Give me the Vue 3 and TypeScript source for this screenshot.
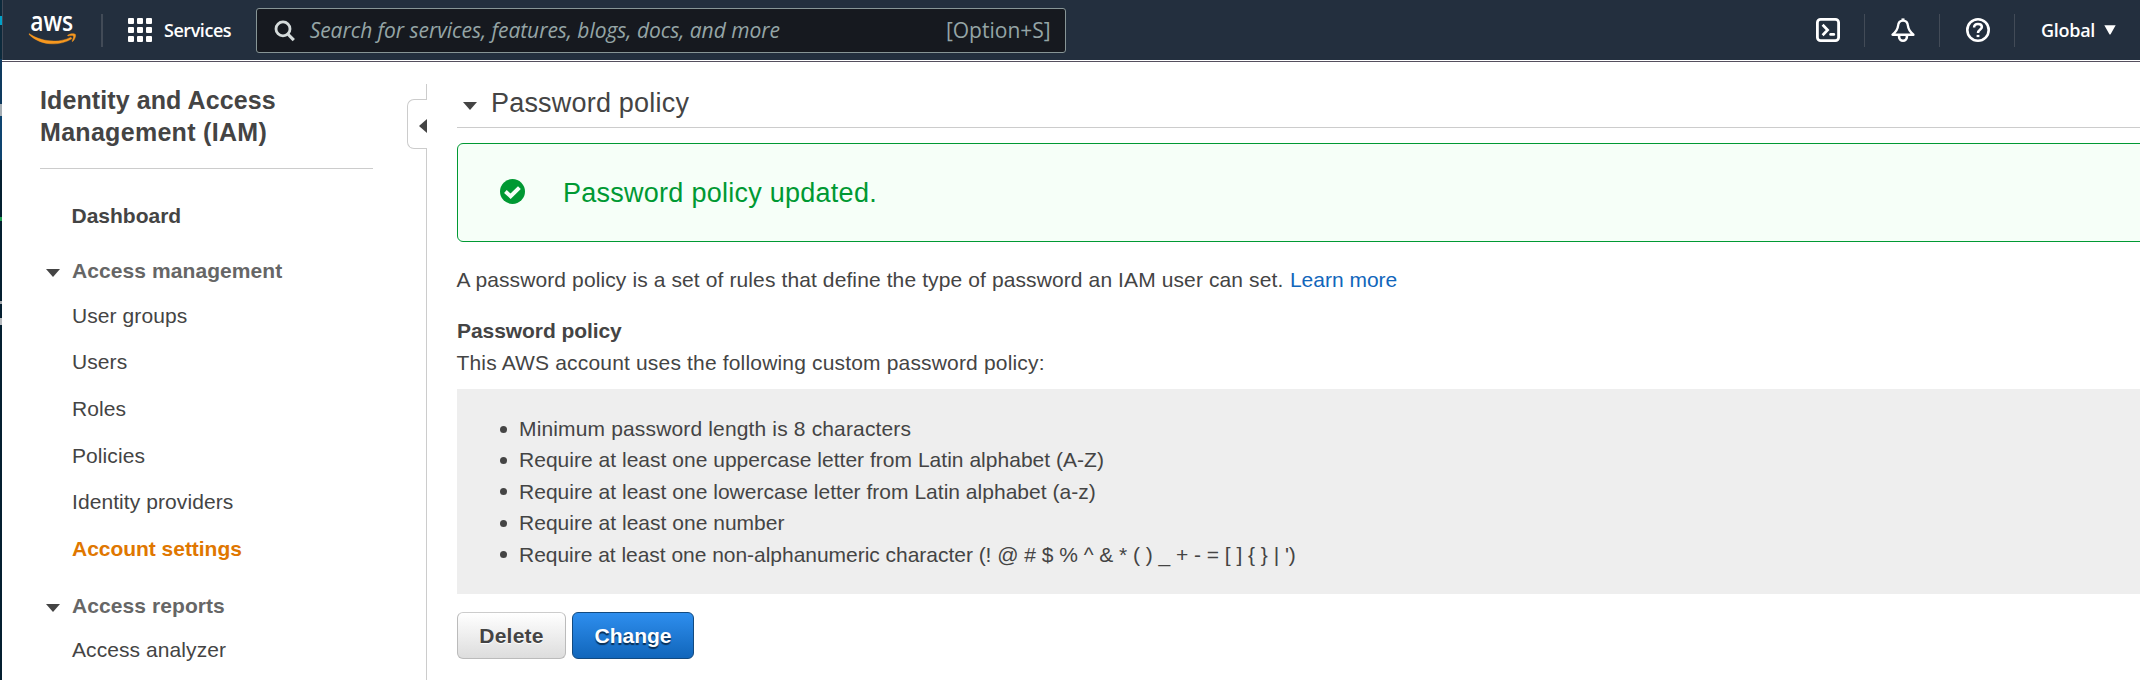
<script setup lang="ts">
interface NavItem {
  label: string
  active?: boolean
}
interface NavGroup {
  label: string
  items: NavItem[]
}

const groups: NavGroup[] = [
  {
    label: 'Access management',
    items: [
      { label: 'User groups' },
      { label: 'Users' },
      { label: 'Roles' },
      { label: 'Policies' },
      { label: 'Identity providers' },
      { label: 'Account settings', active: true },
    ],
  },
  { label: 'Access reports', items: [{ label: 'Access analyzer' }] },
]

const rules: string[] = [
  'Minimum password length is 8 characters',
  'Require at least one uppercase letter from Latin alphabet (A-Z)',
  'Require at least one lowercase letter from Latin alphabet (a-z)',
  'Require at least one number',
  "Require at least one non-alphanumeric character (! @ # $ % ^ & * ( ) _ + - = [ ] { } | ')",
]

const gridDots = [0, 9, 18]
</script>

<template>
  <div class="window">
    <div class="edge"></div>
    <div class="console">
      <header class="topbar">
        <svg class="logo" width="58" height="58" viewBox="0 -12 58 58">
          <text x="2.2" y="19.2" textLength="43" lengthAdjust="spacingAndGlyphs" class="logo-text">aws</text>
          <path d="M1.2 21.6C13 30 31 31.5 43 25.2L43.8 26.8C31 34.6 12 33.6 1 22.4Z" fill="#f7981f" stroke="#f7981f" stroke-width="0.4" />
          <path d="M39.8 23.2C42.5 21.3 46.5 21.4 47.4 22.4C48 23.8 46.8 27.6 44.8 29.4C44.2 29.6 44 29.3 44.3 28.7C45.2 26.6 45.9 24.6 45.4 24C44.8 23.4 42.2 23.5 40.4 23.9C39.7 24 39.4 23.6 39.8 23.2Z" fill="#f7981f" stroke="#f7981f" stroke-width="0.5" />
        </svg>
        <span class="divider first"></span>
        <button class="services">
          <svg width="24" height="24" viewBox="0 0 24 24" fill="#fff">
            <template v-for="y in gridDots" :key="y">
              <rect v-for="x in gridDots" :key="x" :x="x" :y="y" width="6" height="6" rx="1" />
            </template>
          </svg>
          <span>Services</span>
        </button>
        <div class="search">
          <svg width="22" height="22" viewBox="0 0 22 22" fill="none" stroke="#d5dbdb">
            <circle cx="9" cy="8.9" r="7" stroke-width="2.8" />
            <path d="M13.8 14L19.8 20.2" stroke-width="3.2" />
          </svg>
          <span class="hint">Search for services, features, blogs, docs, and more</span>
          <span class="shortcut">[Option+S]</span>
        </div>
        <nav class="tools">
          <svg width="24" height="24" viewBox="0 0 24 24" fill="none" stroke="#fff">
            <rect x="1.4" y="1.4" width="21.2" height="21.2" rx="3.2" stroke-width="2.8" />
            <path d="M6.6 6.8L11.6 12L6.6 17.2" stroke-width="2.7" />
            <path d="M14.6 16.4H17.8" stroke-width="2.7" stroke-linecap="round" />
          </svg>
          <span class="divider"></span>
          <svg width="24" height="24" viewBox="0 0 24 24" fill="none" stroke="#fff" stroke-linejoin="round">
            <path d="M12 0.4V3" stroke-width="3" stroke-linecap="butt" />
            <path d="M12 2.6C9 2.6 7.3 4.8 7 8C6.8 11.2 5.2 13.4 1.6 16.7H22.4C18.8 13.4 17.2 11.2 17 8C16.7 4.8 15 2.6 12 2.6Z" stroke-width="2.4" />
            <path d="M8.1 17.5V18.8A3.9 3.9 0 0 0 15.9 18.8V17.5" stroke-width="2.6" />
          </svg>
          <span class="divider"></span>
          <svg width="24" height="24" viewBox="0 0 24 24" fill="none" stroke="#fff">
            <circle cx="12" cy="12" r="10.7" stroke-width="2.6" />
            <path d="M8.1 9.4C8.1 7 9.7 5.9 12 5.9C14.4 5.9 15.9 7.1 15.9 9C15.9 11.4 12 11.6 12 14.9" stroke-width="2.5" />
            <path d="M10.6 18H13.4" stroke-width="2.2" />
          </svg>
          <span class="divider"></span>
          <button class="region">
            <span>Global</span>
            <svg width="12" height="10" viewBox="0 0 12 10"><path d="M0.3 0.3H11.7L6.6 9.2Q6 10 5.4 9.2Z" fill="#fff" /></svg>
          </button>
        </nav>
      </header>

      <div class="body">
        <aside class="sidebar">
          <h1 class="service-name">Identity and Access<br /><span class="wide">Management (IAM)</span></h1>
          <a class="dashboard">Dashboard</a>
          <section v-for="group in groups" :key="group.label" class="group">
            <h2 class="group-title">
              <svg width="14" height="8" viewBox="0 0 14 8"><path d="M0 0H14L7 8Z" fill="#444" /></svg>
              <span>{{ group.label }}</span>
            </h2>
            <a v-for="item in group.items" :key="item.label" class="item" :class="{ active: item.active }">{{ item.label }}</a>
          </section>
        </aside>

        <div class="rail">
          <span class="rail-top"></span>
          <span class="handle">
            <svg width="8" height="14" viewBox="0 0 8 14"><path d="M8 0V14L0 7Z" fill="#444" /></svg>
          </span>
          <span class="rail-rest"></span>
        </div>

        <main class="content">
          <h2 class="section-title">
            <svg width="14" height="8" viewBox="0 0 14 8"><path d="M0 0H14L7 8Z" fill="#444" /></svg>
            <span>Password policy</span>
          </h2>
          <div class="alert">
            <svg width="25" height="25" viewBox="0 0 25 25">
              <circle cx="12.5" cy="12.5" r="12.5" fill="#093" />
              <path d="M5.4 12.6L10.6 17.2L19.4 8.6" fill="none" stroke="#f6fff8" stroke-width="4" />
            </svg>
            <span>Password policy updated.</span>
          </div>
          <p class="intro">
            <span>A password policy is a set of rules that define the type of password an IAM user can set.</span>
            <a class="link">Learn more</a>
          </p>
          <h3 class="sub">Password policy</h3>
          <p class="desc">This AWS account uses the following custom password policy:</p>
          <ul class="rules">
            <li v-for="rule in rules" :key="rule"><i class="bullet"></i>{{ rule }}</li>
          </ul>
          <div class="actions">
            <button class="btn delete">Delete</button>
            <button class="btn change">Change</button>
          </div>
        </main>
      </div>
    </div>
  </div>
</template>

<style>
body {
  margin: 0;
  background: #fff;
}
</style>

<style scoped>
.window {
  display: flex;
  width: 2140px;
  height: 680px;
  overflow: hidden;
  font: 21px/31.4px "Liberation Sans", Arial, sans-serif;
  color: #444;
}
h1, h2, h3, p, ul {
  margin: 0;
  padding: 0;
}
svg {
  display: block;
  flex: none;
}
button {
  font: inherit;
  color: inherit;
  background: none;
  border: 0;
  padding: 0;
}
.edge {
  flex: none;
  width: 2px;
  background: linear-gradient(
    #0c2a3c 0 16px, #00a1c9 16px 25px, #0c2a3c 25px 59px, #0e3a5f 59px 104px,
    #a5adb3 104px 116px, #0e4470 116px 160px, #041f30 160px 217px, #1a9c50 217px 221px,
    #041f30 221px 301px, #a5a9ad 301px 304px, #041f30 304px 318px, #b5b9bd 318px 325px,
    #041f30 325px 100%
  );
}
.console {
  flex: 1;
  min-width: 0;
  display: flex;
  flex-direction: column;
}

.topbar {
  flex: none;
  box-sizing: border-box;
  height: 60px;
  display: flex;
  align-items: center;
  padding: 0 24px 0 25px;
  border-left: 1px solid #434b58;
  background: #232f3e;
  color: #fff;
  font-family: "Open Sans", "Noto Sans", sans-serif;
}
.logo {
  margin-top: -2px;
  overflow: visible;
}
.logo-text {
  font: 600 27px/1 "Open Sans", "Noto Sans", sans-serif;
  fill: #fff;
}
.divider {
  flex: none;
  width: 1px;
  height: 33px;
  background: #424b57;
}
.divider.first {
  width: 2px;
  margin-left: 15px;
}
.services {
  display: flex;
  align-items: center;
  gap: 12px;
  margin-left: 25px;
  font-size: 18px;
  font-weight: 600;
  letter-spacing: -0.45px;
}
.services span,
.region span {
  margin-top: 1px;
}
.search {
  box-sizing: border-box;
  width: 810px;
  height: 45px;
  margin: 1px 0 0 24.5px;
  padding: 0 14px 0 17px;
  display: flex;
  align-items: center;
  border: 1px solid #879596;
  border-radius: 3px;
  background: #16191f;
  color: #95a5a6;
  font-weight: 500;
}
.hint {
  margin-left: 14px;
  font-style: italic;
  letter-spacing: -0.05px;
}
.shortcut {
  margin-left: auto;
}
.tools {
  margin-left: auto;
  display: flex;
  align-items: center;
}
.tools .divider {
  margin: 0 26px 0 24px;
}
.region {
  display: flex;
  align-items: center;
  gap: 9px;
  font-size: 18px;
  font-weight: 600;
  letter-spacing: -0.3px;
}

.body {
  flex: 1;
  display: flex;
  margin-top: 1px;
  border-top: 1px solid #56505f;
  min-height: 0;
}
.sidebar {
  flex: none;
  width: 405px;
}
.service-name {
  box-sizing: border-box;
  width: 333px;
  height: 107px;
  margin-left: 38px;
  padding-top: 21.5px;
  border-bottom: 1px solid #ccc;
  font-size: 25px;
  line-height: 32px;
  letter-spacing: 0.1px;
}
.wide {
  letter-spacing: 0.3px;
}
.dashboard {
  display: block;
  margin: 15px 0 0 69.5px;
  line-height: 64.6px;
  font-weight: bold;
}
.group-title {
  display: flex;
  align-items: center;
  gap: 12px;
  margin-left: 44px;
  height: 44px;
  font-size: 21px;
  color: #666;
  letter-spacing: 0.08px;
}
.group-title svg {
  margin-top: 4px;
}
.group + .group .group-title {
  height: 41.4px;
  padding-top: 12.7px;
}
.item {
  display: block;
  margin-left: 70px;
  line-height: 46.7px;
  letter-spacing: 0.08px;
}
.item.active {
  color: #e07700;
  font-weight: bold;
  letter-spacing: -0.03px;
}

.rail {
  flex: none;
  width: 20px;
  padding-top: 22px;
  display: flex;
  flex-direction: column;
}
.rail-top {
  height: 15px;
  border-right: 1px solid #ccc;
}
.handle {
  box-sizing: border-box;
  height: 50px;
  display: flex;
  align-items: center;
  justify-content: flex-end;
  padding-top: 3px;
  border: 1px solid #ccc;
  border-right: 0;
  border-radius: 7px 0 0 7px;
}
.rail-rest {
  flex: 1;
  border-right: 1px solid #ccc;
}

.content {
  flex: 1;
  min-width: 0;
  padding: 16px 0 0 30px;
}
.section-title {
  display: flex;
  align-items: center;
  gap: 14px;
  height: 49px;
  padding-left: 6px;
  border-bottom: 1px solid #ccc;
  font-size: 27px;
  font-weight: normal;
  letter-spacing: 0.2px;
}
.section-title svg {
  margin-top: 7px;
}
.section-title span {
  margin-top: 2px;
}
.alert {
  box-sizing: border-box;
  height: 99px;
  margin: 15px -10px 0 0;
  padding-left: 42px;
  display: flex;
  align-items: center;
  gap: 38px;
  border: 1px solid #093;
  border-radius: 6px;
  background: #f6fff8;
  color: #093;
  font-size: 27px;
  letter-spacing: 0.26px;
}
.alert svg {
  margin-top: -2px;
}
.alert span {
  margin-top: 2px;
}
.intro {
  display: flex;
  gap: 6.5px;
  margin-top: 22px;
  margin-left: -0.5px;
  letter-spacing: 0.11px;
}
.link {
  color: #1166bb;
  letter-spacing: 0;
}
.sub {
  margin-top: 19.5px;
  font-size: 21px;
  line-height: 32px;
  letter-spacing: -0.07px;
}
.desc {
  margin-left: -0.5px;
  line-height: 32px;
  letter-spacing: 0.17px;
}
.rules {
  margin-top: 10px;
  padding: 24px 0 24px 43px;
  background: #eee;
  list-style: none;
}
.rules li {
  display: flex;
  align-items: center;
  gap: 12px;
  letter-spacing: 0.02px;
  white-space: pre;
}
.rules li:first-child {
  letter-spacing: 0.15px;
}
.rules li:last-child {
  letter-spacing: -0.03px;
}
.bullet {
  width: 7px;
  height: 7px;
  margin-top: 1px;
  border-radius: 50%;
  background: #444;
}
.actions {
  display: flex;
  gap: 6px;
  margin-top: 18px;
}
.btn {
  box-sizing: border-box;
  height: 47px;
  border: 1px solid #bbb;
  border-radius: 6px;
  font-weight: bold;
}
.delete {
  width: 109px;
  border-top-color: #ccc;
  background: linear-gradient(#fff, #ddd);
  text-shadow: 0 1px 1px #fff;
  letter-spacing: 0.25px;
}
.change {
  width: 122px;
  border-color: #124a80;
  background: linear-gradient(#2e8eee, #1166bb);
  color: #fff;
  text-shadow: 0 2px 1px #0a2f55;
}
</style>
